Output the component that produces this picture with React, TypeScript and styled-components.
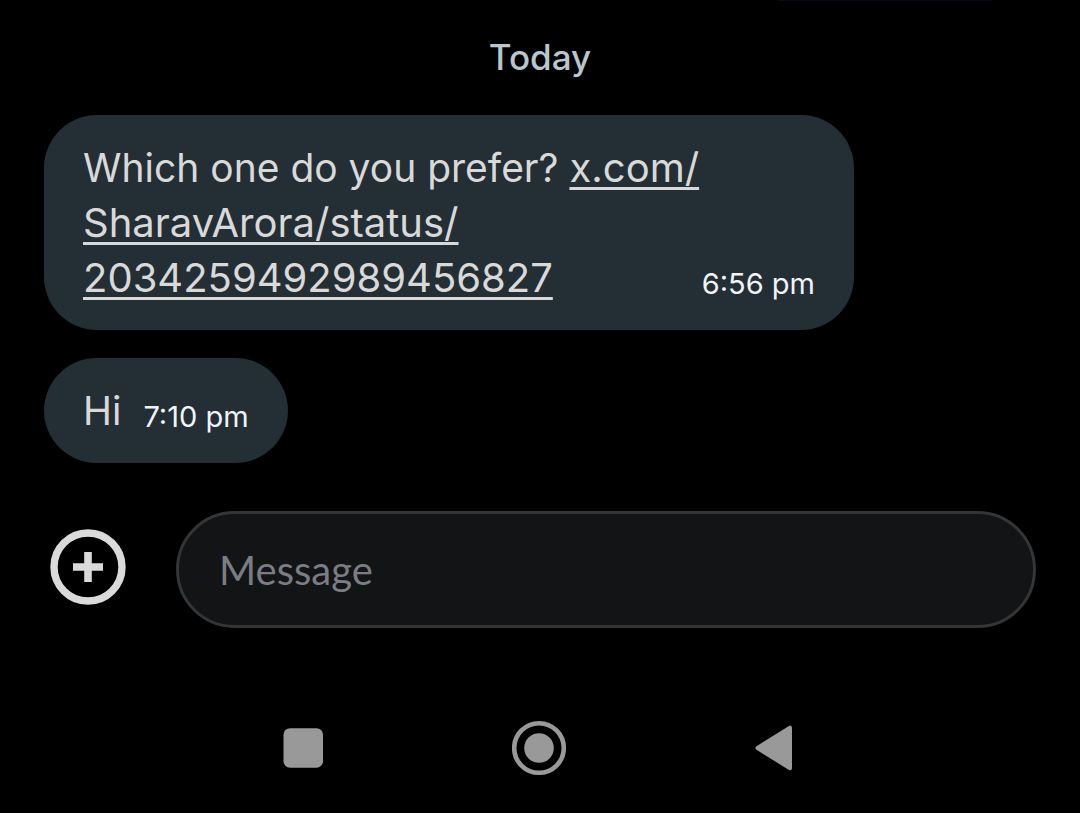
import React from 'react';
import styled, { createGlobalStyle } from 'styled-components';

const GlobalStyle = createGlobalStyle`
  *, *::before, *::after { box-sizing: border-box; }
  body {
    margin: 0;
    background: #000;
    font-family: Inter, "Liberation Sans", sans-serif;
  }
`;

const Screen = styled.div`
  display: flex;
  flex-direction: column;
  min-height: 100vh;
  background: #000;
`;

const Thread = styled.main`
  display: flex;
  flex-direction: column;
  align-items: flex-start;
`;

const PreviousEdge = styled.div`
  align-self: flex-end;
  width: 214px;
  height: 1px;
  margin-right: 88px;
  background: #060a1e;
`;

const DayLabel = styled.h2`
  align-self: center;
  margin: 32px 0 34px;
  font-size: 35px;
  line-height: 48px;
  font-weight: 500;
  color: #b9c6ce;
`;

const Bubble = styled.article<{ $wide?: boolean }>`
  display: flex;
  justify-content: space-between;
  gap: ${(p) => (p.$wide ? 0 : 22)}px;
  width: ${(p) => (p.$wide ? '75%' : 'auto')};
  margin: 0 0 28px 44px;
  padding: 25px 39px;
  border-radius: 53px;
  background: #242e35;
`;

const Text = styled.p`
  margin: 0;
  min-width: 0;
  font-size: 39px;
  line-height: 55px;
  color: #d9d9d9;
`;

const Link = styled.a`
  font-size: 40px;
  color: inherit;
  text-decoration: underline;
  text-decoration-thickness: 3px;
  text-underline-offset: 5px;
  text-decoration-skip-ink: none;
`;

const Time = styled.time`
  align-self: flex-end;
  flex: none;
  font-size: 29px;
  line-height: 42px;
  white-space: nowrap;
  color: #f0f4f8;
`;

const Composer = styled.form`
  display: flex;
  align-items: center;
  gap: 50px;
  margin-top: 20px;
  padding: 0 44px 0 50px;
`;

const AddButton = styled.button`
  flex: none;
  padding: 0 0 5px;
  border: 0;
  background: none;
  line-height: 0;
  color: #dadada;
`;

const MessageInput = styled.input`
  flex: 1;
  min-width: 0;
  height: 117px;
  padding: 0 40px;
  border: 3px solid #333537;
  border-radius: 59px;
  background: #121415;
  font-family: Lato, "Open Sans", sans-serif;
  font-size: 40px;
  color: #d9d9d9;
  outline: none;

  &::placeholder { color: #7a7d84; opacity: 1; }
`;

const NavBar = styled.nav`
  display: flex;
  justify-content: center;
  gap: 180px;
  margin-top: auto;
  padding: 60px 0 37px;
`;

const NavButton = styled.button`
  padding: 0;
  border: 0;
  background: none;
  line-height: 0;
  color: #999;
`;

export default function App() {
  return (
    <Screen>
      <GlobalStyle />
      <Thread>
        <PreviousEdge />
        <DayLabel>Today</DayLabel>
        <Bubble $wide>
          <Text>
            Which one do you prefer?{' '}
            <Link href="https://x.com/SharavArora/status/2034259492989456827">
              x.com/<wbr />SharavArora/status/<wbr />2034259492989456827
            </Link>
          </Text>
          <Time dateTime="18:56">6:56 pm</Time>
        </Bubble>
        <Bubble>
          <Text>Hi</Text>
          <Time dateTime="19:10">7:10 pm</Time>
        </Bubble>
      </Thread>
      <Composer onSubmit={(e) => e.preventDefault()}>
        <AddButton type="button" aria-label="Add attachment">
          <svg width="76" height="76" viewBox="0 0 76 76" fill="none" stroke="currentColor">
            <circle cx="38" cy="38" r="34" strokeWidth="7.4" />
            <path d="M38 23v30M23 38h30" strokeWidth="7.6" />
          </svg>
        </AddButton>
        <MessageInput type="text" placeholder="Message" aria-label="Message" />
      </Composer>
      <NavBar aria-label="System navigation">
        <NavButton type="button" aria-label="Recent apps">
          <svg width="56" height="56" viewBox="0 0 56 56" fill="currentColor">
            <rect x="7.5" y="8.2" width="39.5" height="39.5" rx="6.5" />
          </svg>
        </NavButton>
        <NavButton type="button" aria-label="Home">
          <svg width="56" height="56" viewBox="0 0 56 56" fill="currentColor">
            <circle cx="27" cy="28" r="24.8" fill="none" stroke="currentColor" strokeWidth="4.6" />
            <circle cx="27" cy="28" r="14.8" />
          </svg>
        </NavButton>
        <NavButton type="button" aria-label="Back">
          <svg width="56" height="56" viewBox="0 0 56 56" fill="currentColor">
            <path
              d="M9.5 28L42 7.7V48.3Z"
              stroke="currentColor"
              strokeWidth="4"
              strokeLinejoin="round"
            />
          </svg>
        </NavButton>
      </NavBar>
    </Screen>
  );
}
